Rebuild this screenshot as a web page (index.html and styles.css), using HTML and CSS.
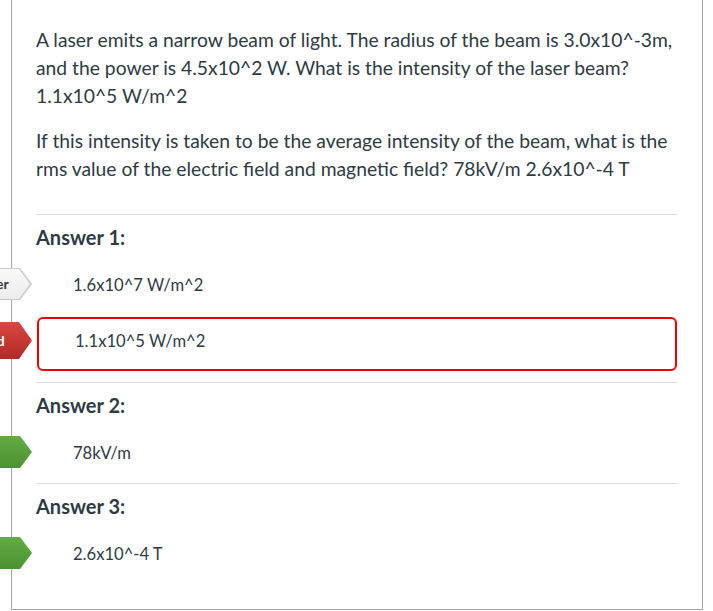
FILE: index.html
```html
<!DOCTYPE html>
<html lang="en">

<head>
    <meta charset="UTF-8">
    <meta name="viewport" content="width=device-width, initial-scale=1.0">
    <title>Quiz Results</title>
    <link rel="stylesheet" href="styles.css">
</head>

<body>
    <!-- question frame, the top edge is cut off by the screenshot -->
    <div class="frame">
        <div class="question-text">
            <p>A laser emits a narrow beam of light. The radius of the beam is 3.0x10^-3m, and the power is 4.5x10^2 W. What is the intensity of the laser beam? 1.1x10^5 W/m^2</p>
            <p>If this intensity is taken to be the average intensity of the beam, what is the rms value of the electric field and magnetic field? 78kV/m 2.6x10^-4 T</p>
        </div>

        <div class="answer-group">
            <div class="answer-label">Answer 1:</div>
            <div class="answers">
                <div class="answer">
                    <span class="arrow arrow-info">Correct Answer</span>
                    1.6x10^7 W/m^2
                </div>
                <div class="answer selected">
                    <span class="arrow arrow-wrong">You Answered</span>
                    1.1x10^5 W/m^2
                </div>
            </div>
        </div>

        <div class="answer-group">
            <div class="answer-label">Answer 2:</div>
            <div class="answers">
                <div class="answer">
                    <span class="arrow arrow-correct">Correct!</span>
                    78kV/m
                </div>
            </div>
        </div>

        <div class="answer-group">
            <div class="answer-label">Answer 3:</div>
            <div class="answers">
                <div class="answer">
                    <span class="arrow arrow-correct">Correct!</span>
                    2.6x10^-4 T
                </div>
            </div>
        </div>
    </div>
</body>

</html>
```

FILE: styles.css
```css
* {
    box-sizing: border-box;
}

html,
body {
    margin: 0;
    height: 100%;
    overflow: hidden;
    background: #fff;
}

body {
    font-family: Lato, "Open Sans", sans-serif;
    color: #2d3b45;
}

.frame {
    margin: -1px 0 0 11px;
    width: 692px;
    height: 611px;
    border: 1px solid #a5a5a5;
    padding: 0 25px 0 24px;
}

.question-text {
    padding-top: 26px;
    padding-bottom: 31px;
    font-size: 19.3px;
    line-height: 28px;
}

.question-text p {
    margin: 0;
}

.question-text p + p {
    margin-top: 17px;
}

.answer-group {
    border-top: 1px solid #ddd;
    padding-bottom: 2px;
}

.answer-label {
    margin-top: 9px;
    margin-bottom: 13px;
    font-size: 20px;
    font-weight: 700;
    line-height: 26px;
}

.answers {
    display: flex;
    flex-direction: column;
    gap: 4px;
}

.answer {
    position: relative;
    margin-left: 1px;
    height: 50px;
    padding: 12px 36px 0;
    font-size: 16.6px;
    line-height: 20px;
}

/* the answer the student picked gets a red outline */
.answer.selected {
    height: 54px;
    margin-bottom: 9px;
    border: 2px solid #e00;
    border-radius: 6px;
}

.arrow {
    position: absolute;
    top: 5px;
    left: -135px;
    width: 130px;
    height: 32px;
    padding-right: 14px;
    font-size: 14px;
    font-weight: 700;
    line-height: 32px;
    text-align: center;
    white-space: nowrap;
    clip-path: polygon(0 0, 118px 0, 130px 50%, 118px 100%, 0 100%);
}

.selected .arrow {
    top: 3px;
    left: -137px;
    height: 37px;
    line-height: 37px;
    clip-path: polygon(0 0, 117px 0, 130px 50%, 117px 100%, 0 100%);
}

.arrow-info {
    isolation: isolate;
    background: #c9c9c9;
    color: #2d3b45;
}

/* inner fill, so the grey arrow gets a thin border */
.arrow-info::before {
    content: "";
    position: absolute;
    inset: 1px;
    z-index: -1;
    background: linear-gradient(#fafafa, #ececec);
    clip-path: polygon(0 0, 116px 0, 127px 50%, 116px 100%, 0 100%);
}

.arrow-wrong {
    background: linear-gradient(#d9473f, #b12a27);
    color: #fff;
}

.arrow-correct {
    background: linear-gradient(#62ad42, #4b9132);
    color: #fff;
}
```
